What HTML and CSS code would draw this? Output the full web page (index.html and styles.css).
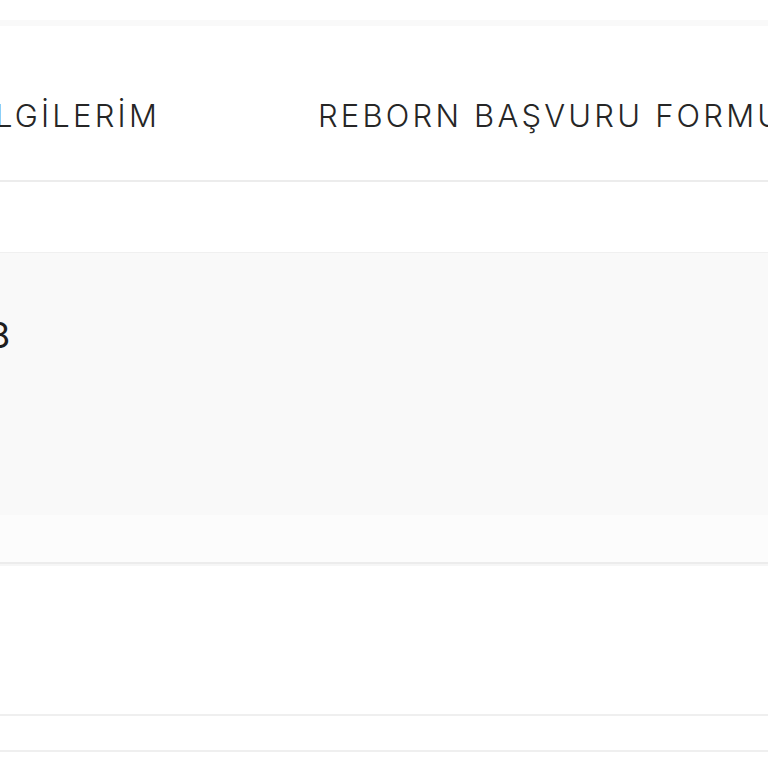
FILE: index.html
```html
<!DOCTYPE html>
<html lang="tr">
<head>
<meta charset="utf-8">
<title>Reborn</title>
<link rel="stylesheet" href="styles.css">
</head>
<body>
<div class="page">
  <div class="top-strip"></div>
  <div class="top-band"></div>
  <nav class="tabs">
    <div class="tabs-track">
      <a class="tab tab-first">BİLGİLERİM</a>
      <a class="tab">REBORN BAŞVURU FORMU</a>
    </div>
  </nav>
  <div class="spacer"></div>
  <section class="panel">
    <div class="panel-value">8</div>
  </section>
  <div class="panel-foot"></div>
  <div class="row row-tall"></div>
  <div class="row row-short"></div>
  <div class="row row-end"></div>
</div>
</body>
</html>
```

FILE: styles.css
```css
html, body {
  margin: 0;
  padding: 0;
  background: #ffffff;
}
body {
  font-family: Inter, "Liberation Sans", sans-serif;
  color: #2e2e2e;
  overflow: hidden;
}
.page {
  width: 768px;
  height: 768px;
  overflow: hidden;
}
.top-strip {
  height: 20px;
  background: #ffffff;
}
.top-band {
  height: 6px;
  background: #f9f9f9;
}
.tabs {
  height: 154px;
  display: flex;
  align-items: center;
  border-bottom: 2px solid #ececec;
  overflow: hidden;
}
.tabs-track {
  display: flex;
  gap: 158px;
  margin-left: -143px;
  white-space: nowrap;
  padding-top: 26px;
}
.tab {
  font-size: 31px;
  font-weight: 300;
  letter-spacing: 3.2px;
  color: #262626;
  text-decoration: none;
  line-height: 36px;
}
.tab-first {
  flex: 0 0 303px;
  text-align: right;
}
.spacer {
  height: 70px;
  border-bottom: 1px solid #f0f0f0;
}
.panel {
  height: 262px;
  background: #f9f9f9;
  padding-top: 62px;
  box-sizing: border-box;
}
.panel-value {
  font-size: 36px;
  font-weight: 400;
  line-height: 40px;
  margin-left: -12px;
  color: #1e1e1e;
}
.panel-foot {
  height: 47px;
  background: #fcfcfc;
  border-bottom: 2px solid #ececec;
}
.row {
  border-bottom: 2px solid #efefef;
}
.row-tall {
  height: 148px;
  border-top: 2px solid #f6f6f6;
}
.row-short {
  height: 34px;
}
.row-end {
  height: 20px;
  border-bottom: none;
}
```
